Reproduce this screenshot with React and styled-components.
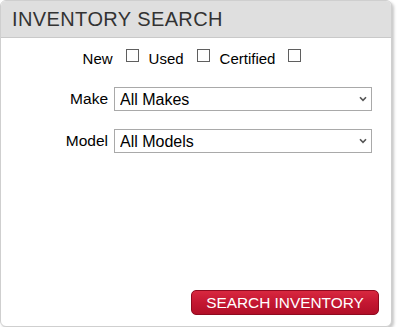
import React from "react";
import styled, { createGlobalStyle } from "styled-components";

const FONT = `"Liberation Sans", Arial, sans-serif`;

const Global = createGlobalStyle`
  html, body { margin: 0; padding: 0; background: #fff; }
  body { font-family: ${FONT}; }
`;

const Card = styled.div`
  box-sizing: border-box;
  width: 392px;
  height: 327px;
  border: 1px solid #cfcfcf;
  border-radius: 6px;
  box-shadow: 2px 2px 3px rgba(0, 0, 0, 0.22);
  background: #fff;
  display: flex;
  flex-direction: column;
  overflow: hidden;
  font-family: ${FONT};
`;

const Header = styled.div`
  box-sizing: border-box;
  height: 37px;
  background: #dfdfdf;
  border-bottom: 1px solid #c9c9c9;
  padding: 6px 0 0 11px;
`;

const Title = styled.h2`
  margin: 0;
  font-family: ${FONT};
  font-weight: normal;
  font-size: 20px;
  letter-spacing: 0.4px;
  line-height: 24px;
  color: #333;
`;

const Body = styled.div`
  flex: 1;
  display: flex;
  flex-direction: column;
  padding: 12px 0 11px 0;
`;

const CheckRow = styled.div`
  display: flex;
  justify-content: center;
  align-items: flex-start;
  padding-right: 8px;
  font-size: 15px;
  line-height: 18px;
  color: #000;
`;

const CheckLabel = styled.span`
  margin-left: ${(p) => (p.$first ? 0 : 10)}px;
`;

const Box = styled.input.attrs({ type: "checkbox" })`
  appearance: none;
  -webkit-appearance: none;
  box-sizing: border-box;
  width: 13px;
  height: 13px;
  margin: -1px 0 0 13px;
  border: 1px solid #5f5f5f;
  border-radius: 0;
  background: #fff;
`;

const FieldRow = styled.div`
  display: flex;
  align-items: center;
  margin-top: ${(p) => p.$top}px;
`;

const Label = styled.label`
  width: 107px;
  text-align: right;
  font-size: 15.5px;
  color: #000;
  margin-right: 6px;
`;

const SelectWrap = styled.div`
  position: relative;
  width: 258px;
  height: 24px;
`;

const Select = styled.select`
  appearance: none;
  -webkit-appearance: none;
  box-sizing: border-box;
  width: 100%;
  height: 24px;
  border: 1px solid #a9a9a9;
  border-radius: 0;
  background: #fff;
  font-family: ${FONT};
  font-size: 16px;
  color: #000;
  padding: 0 0 0 5px;
  outline: none;
`;

const Chevron = styled.svg`
  position: absolute;
  right: 5px;
  top: 9px;
  width: 8px;
  height: 6px;
  pointer-events: none;
`;

const Footer = styled.div`
  margin-top: auto;
  display: flex;
  justify-content: flex-end;
  padding-right: 12px;
`;

const Button = styled.button`
  box-sizing: border-box;
  width: 188px;
  height: 25px;
  border: 1px solid #8f0a1f;
  border-radius: 5px;
  background: linear-gradient(to bottom, #d8283f 0%, #c41732 50%, #b20f28 100%);
  color: #fff;
  font-family: ${FONT};
  font-size: 15.4px;
  line-height: 20px;
  padding: 0;
  text-transform: uppercase;
`;

function Field({ label, value, top }) {
  return (
    <FieldRow $top={top}>
      <Label>{label}</Label>
      <SelectWrap>
        <Select defaultValue={value}>
          <option>{value}</option>
        </Select>
        <Chevron viewBox="0 0 8 6">
          <path d="M1 1.2 L4 4.4 L7 1.2" fill="none" stroke="#555" strokeWidth="1.6" />
        </Chevron>
      </SelectWrap>
    </FieldRow>
  );
}

export default function App() {
  return (
    <>
      <Global />
      <Card>
        <Header>
          <Title>INVENTORY SEARCH</Title>
        </Header>
        <Body>
          <CheckRow>
            <CheckLabel $first>New</CheckLabel>
            <Box />
            <CheckLabel>Used</CheckLabel>
            <Box />
            <CheckLabel>Certified</CheckLabel>
            <Box />
          </CheckRow>
          <Field label="Make" value="All Makes" top={19} />
          <Field label="Model" value="All Models" top={18} />
          <Footer>
            <Button>Search Inventory</Button>
          </Footer>
        </Body>
      </Card>
    </>
  );
}
